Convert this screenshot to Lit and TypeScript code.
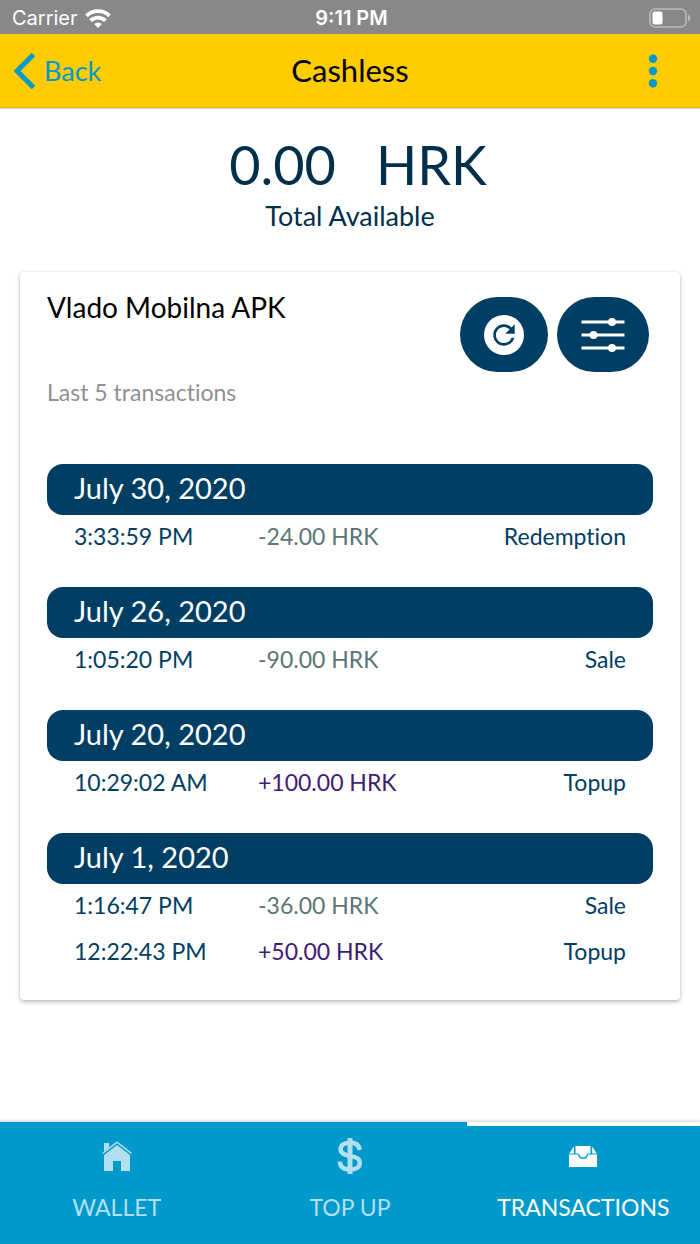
import { LitElement, html, css, svg } from "lit";
import { customElement, property, state } from "lit/decorators.js";
import { classMap } from "lit/directives/class-map.js";

interface Transaction {
  time: string;
  amount: string;
  kind: string;
}

interface Day {
  date: string;
  items: Transaction[];
}

const DAYS: Day[] = [
  { date: "July 30, 2020", items: [{ time: "3:33:59 PM", amount: "-24.00 HRK", kind: "Redemption" }] },
  { date: "July 26, 2020", items: [{ time: "1:05:20 PM", amount: "-90.00 HRK", kind: "Sale" }] },
  { date: "July 20, 2020", items: [{ time: "10:29:02 AM", amount: "+100.00 HRK", kind: "Topup" }] },
  {
    date: "July 1, 2020",
    items: [
      { time: "1:16:47 PM", amount: "-36.00 HRK", kind: "Sale" },
      { time: "12:22:43 PM", amount: "+50.00 HRK", kind: "Topup" },
    ],
  },
];

const homeIcon = html`<svg width="30" height="30" viewBox="0 0 30 30" aria-hidden="true">
  <path fill="currentColor" d="M2 2h5v4.600L2 10.600z" />
  <path fill="none" stroke="currentColor" stroke-width="1.500" d="M.6 12.400 15 1.200l14.400 11.200" />
  <path fill="currentColor" d="M15 4 28 14v16h-9V20h-8v10H2V14z" />
</svg>`;

const dollarIcon = html`<svg width="26" height="36" viewBox="0 0 26 36" aria-hidden="true">
  <path fill="none" stroke="currentColor" stroke-width="4.500"
    d="M22.600 12C22.300 7 18.500 4.700 13 4.700c-5.500 0-9.400 2.300-9.400 6.500 0 4.400 4 5.600 9.400 6.700 5.800 1.200 9.800 2.400 9.800 7 0 4.400-4.200 6.600-9.800 6.600-6 0-9.900-2.500-10.200-8" />
  <path fill="currentColor" d="M10.500 0h5v36h-5z" />
</svg>`;

const trayIcon = html`<svg width="28" height="21" viewBox="0 0 28 21" aria-hidden="true">
  <path fill="currentColor" d="M6.500 0h15v7.500h-3l-2 3.200q-2.500 1.600-5 0l-2-3.200h-3z" />
  <path fill="currentColor" d="M4.800.6v6.900H.3zM23.200.6v6.900h4.500z" />
  <path fill="currentColor" d="M0 8.500h8.800q1.400 4.600 5.200 4.600T19.200 8.500H28V21H0z" />
</svg>`;

const TABS = [
  { id: "wallet", label: "WALLET", icon: homeIcon },
  { id: "topup", label: "TOP UP", icon: dollarIcon },
  { id: "transactions", label: "TRANSACTIONS", icon: trayIcon },
];

@customElement("status-bar")
class StatusBar extends LitElement {
  static styles = css`
    :host {
      display: grid;
      grid-template-columns: 1fr auto 1fr;
      align-items: center;
      height: 34px;
      padding: 2px 9px 0 12px;
      box-sizing: border-box;
      background: #888;
      color: #fff;
      font: 20px/24px Inter, sans-serif;
    }
    .carrier { display: flex; align-items: center; gap: 7px; }
    .clock { font-weight: 600; }
    .battery { justify-self: end; display: block; }
  `;
  render() {
    return html`
      <div class="carrier">
        <span>Carrier</span>
        <svg width="26" height="19" viewBox="0 0 26 19" aria-hidden="true">
          <g fill="none" stroke="#fff" stroke-width="3.800">
            <path d="M1.500 6.800a16.300 16.300 0 0 1 23 0" />
            <path d="M5.600 11.700a10.500 10.500 0 0 1 14.800 0" />
          </g>
          <path fill="#fff" d="M13 19l-3.900-4a5.500 5.500 0 0 1 7.800 0z" />
        </svg>
      </div>
      <span class="clock">9:11 PM</span>
      <svg class="battery" width="42" height="20" viewBox="0 0 42 20" role="img" aria-label="Battery low">
        <rect x="1" y="1" width="36" height="18" rx="5" fill="none" stroke="#bbb" stroke-width="1.600" />
        <rect x="3.500" y="3.500" width="10" height="13" rx="2.500" fill="#fff" />
        <path fill="#bbb" d="M39 6.500q2.500 1 2.500 3.500T39 13.500z" />
      </svg>
    `;
  }
}

@customElement("nav-bar")
class NavBar extends LitElement {
  static styles = css`
    :host {
      display: grid;
      grid-template-columns: 1fr auto 1fr;
      align-items: center;
      height: 74px;
      padding: 0 14px;
      box-sizing: border-box;
      background: #fc0;
      border-bottom: 1px solid #e6b800;
      box-shadow: 0 1px 1px rgba(0, 0, 0, 0.15);
    }
    .back, .menu {
      display: flex;
      align-items: center;
      border: 0;
      padding: 0;
      background: none;
      color: #09c;
      font: inherit;
      font-size: 27px;
      line-height: 36px;
      cursor: pointer;
    }
    .back { gap: 8px; justify-self: start; }
    .title { margin: 0; padding-bottom: 2px; font-size: 31px; line-height: 36px; font-weight: 400; color: #000; }
    .menu { justify-self: end; padding: 0 28px 0 14px; }
  `;
  render() {
    return html`
      <button class="back" type="button">
        <svg width="22" height="36" viewBox="0 0 22 36" aria-hidden="true">
          <path d="M19.500 1.500 3 18l16.500 16.500" fill="none" stroke="currentColor" stroke-width="5" />
        </svg>
        Back
      </button>
      <h1 class="title">Cashless</h1>
      <button class="menu" type="button" aria-label="More options">
        <svg width="10" height="34" viewBox="0 0 10 34" fill="currentColor" aria-hidden="true">
          <circle cx="5" cy="4.700" r="4.200" /><circle cx="5" cy="17" r="4.200" /><circle cx="5" cy="29.300" r="4.200" />
        </svg>
      </button>
    `;
  }
}

@customElement("day-group")
class DayGroup extends LitElement {
  @property({ attribute: false }) day!: Day;
  static styles = css`
    :host { display: block; }
    .date {
      margin: 0;
      padding: 0 27px 4px;
      border-radius: 16px;
      background: #003e63;
      color: #fff;
      font-size: 29px;
      line-height: 47px;
      font-weight: 400;
    }
    .rows { width: 100%; border-collapse: collapse; table-layout: fixed; font-size: 23px; line-height: 42px; }
    .time, .amount, .kind { padding: 0 0 4px; text-align: left; font-weight: 400; white-space: nowrap; color: #003e63; }
    .time { width: 184px; padding-left: 27px; }
    .amount { color: #5a7677; }
    .credit { color: #401c72; }
    .kind { text-align: right; padding-right: 27px; }
  `;
  render() {
    return html`
      <h3 class="date" id="date">${this.day.date}</h3>
      <table class="rows" aria-labelledby="date">
        <tbody>
          ${this.day.items.map(
            (t) => html`<tr>
              <th class="time" scope="row">${t.time}</th>
              <td class=${classMap({ amount: true, credit: t.amount.startsWith("+") })}>${t.amount}</td>
              <td class="kind">${t.kind}</td>
            </tr>`
          )}
        </tbody>
      </table>
    `;
  }
}

@customElement("tab-bar")
class TabBar extends LitElement {
  @state() private active = "transactions";
  static styles = css`
    :host { display: block; background: #09c; box-shadow: 0 -1px 3px rgba(0, 0, 0, 0.2); }
    .tabs { display: grid; grid-template-columns: repeat(3, 1fr); }
    .tab {
      display: flex;
      flex-direction: column;
      align-items: center;
      gap: 16px;
      height: 122px;
      padding: 12px 0 0;
      border: 0;
      border-top: 4px solid transparent;
      background: none;
      color: #b2e0f0;
      font: inherit;
      font-size: 23px;
      line-height: 34px;
      cursor: pointer;
    }
    .active { color: #fff; border-top-color: #fff; }
    .icon { display: flex; align-items: center; height: 36px; }
  `;
  render() {
    return html`<nav class="tabs">
      ${TABS.map(
        (t) => html`<button
          type="button"
          class=${classMap({ tab: true, active: t.id === this.active })}
          aria-current=${t.id === this.active ? "page" : "false"}
          @click=${() => (this.active = t.id)}
        >
          <span class="icon">${t.icon}</span>
          <span>${t.label}</span>
        </button>`
      )}
    </nav>`;
  }
}

@customElement("app-root")
class AppRoot extends LitElement {
  static styles = css`
    :host {
      display: flex;
      flex-direction: column;
      min-height: 100vh;
      background: #fff;
      font-family: Futura, "Futura PT", Lato, sans-serif;
      font-variant-ligatures: none;
    }
    .content { flex: 1; padding: 24px 20px; }
    .balance { display: flex; flex-direction: column; align-items: center; margin-bottom: 38px; color: #002f4c; }
    .total { display: flex; gap: 40px; padding-left: 16px; font-size: 54px; line-height: 66px; }
    .caption { font-size: 27px; line-height: 36px; }
    .card {
      padding: 16px 27px 24px;
      border-radius: 4px;
      background: #fff;
      box-shadow: 0 2px 4px rgba(0, 0, 0, 0.25), 0 0 2px rgba(0, 0, 0, 0.12);
    }
    .head { display: flex; justify-content: space-between; align-items: flex-start; }
    .name { margin: 0; font-size: 28px; line-height: 38px; font-weight: 400; color: #000; }
    .actions { display: flex; gap: 9px; padding: 9px 4px 0 0; }
    .action {
      display: flex;
      align-items: center;
      justify-content: center;
      width: 88px;
      height: 75px;
      padding: 0;
      border: 0;
      border-radius: 38px;
      background: #003e63;
      cursor: pointer;
    }
    .wide { width: 92px; }
    .note { margin: 2px 0 54px; font-size: 23px; line-height: 36px; color: #8f8f94; }
    .days { display: grid; gap: 26px; }
  `;
  render() {
    return html`
      <status-bar></status-bar>
      <nav-bar></nav-bar>
      <main class="content">
        <section class="balance">
          <div class="total"><span>0.00</span><span>HRK</span></div>
          <div class="caption">Total Available</div>
        </section>
        <section class="card">
          <header class="head">
            <h2 class="name">Vlado Mobilna APK</h2>
            <div class="actions">
              <button class="action" type="button" aria-label="Refresh">
                <svg width="40" height="40" viewBox="0 0 40 40" aria-hidden="true">
                  <circle cx="20" cy="20" r="20" fill="#fff" />
                  <path
                    transform="translate(3.900 3.900) scale(1.340)"
                    fill="#003e63"
                    d="M17.650 6.350C16.200 4.900 14.210 4 12 4c-4.420 0-7.990 3.580-7.990 8s3.570 8 7.990 8c3.730 0 6.840-2.550 7.730-6h-2.080c-.82 2.330-3.040 4-5.650 4-3.310 0-6-2.690-6-6s2.690-6 6-6c1.660 0 3.140.69 4.220 1.780L13 11h7V4l-2.350 2.350z"
                  />
                </svg>
              </button>
              <button class="action wide" type="button" aria-label="Filter">
                <svg width="44" height="36" viewBox="0 0 44 36" fill="#fff" aria-hidden="true">
                  ${[
                    { y: 5, x: 31 },
                    { y: 18, x: 12.5 },
                    { y: 31, x: 31 },
                  ].map(
                    (s) => svg`<rect x="0.500" y=${s.y - 1.5} width="43" height="3" /><circle cx=${s.x} cy=${s.y} r="4" />`
                  )}
                </svg>
              </button>
            </div>
          </header>
          <p class="note">Last 5 transactions</p>
          <div class="days">${DAYS.map((d) => html`<day-group .day=${d}></day-group>`)}</div>
        </section>
      </main>
      <tab-bar></tab-bar>
    `;
  }
}
